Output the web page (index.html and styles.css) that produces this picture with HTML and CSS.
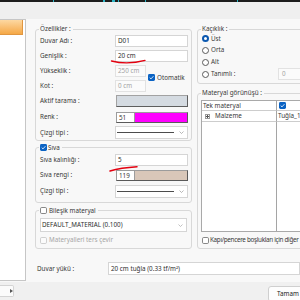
FILE: index.html
```html
<!DOCTYPE html>
<html lang="tr">
<head>
<meta charset="utf-8">
<title>Duvar özellikleri</title>
<link rel="stylesheet" href="styles.css">
</head>
<body>
<div class="window">
  <div class="topline"></div>
  <div class="toolbar"></div>
  <div class="main">
    <div class="tree"><div class="tree-item"></div></div>
    <div class="content">
      <div class="columns">
        <div class="col-left">
          <fieldset class="group props">
            <legend>Özellikler :</legend>
            <div class="form">
              <span class="lbl">Duvar Adı :</span><div class="input">D01</div>
              <span class="lbl">Genişlik :</span><div class="input">20 cm</div>
              <span class="lbl">Yükseklik :</span><div class="input dis h-in">250 cm</div>
              <span class="lbl">Kot :</span><div class="input dis k-in">0 cm</div>
              <div class="auto">
                <svg class="cb" viewBox="0 0 7 7"><rect x="0" y="0" width="7" height="7" rx="1.4" fill="#0b63c4"/><path d="M1.7 3.6 L3 4.9 L5.4 2.2" fill="none" stroke="#fff" stroke-width="0.8"/></svg>
                <span>Otomatik</span>
              </div>
              <span class="lbl">Aktif tarama :</span><div class="hatch"></div>
              <span class="lbl">Renk :</span><div class="swatch"><span class="num">51</span><span class="col magenta"></span></div>
              <span class="lbl">Çizgi tipi :</span><div class="select"><span class="line"></span><svg class="chev" width="5" height="3" viewBox="0 0 5 3"><path d="M0.5 0.5 L2.5 2.5 L4.5 0.5" fill="none" stroke="#9a9a9a" stroke-width="0.7"/></svg></div>
            </div>
          </fieldset>
          <fieldset class="group siva">
            <legend><span class="lg-cb"><svg class="cb" viewBox="0 0 7 7"><rect x="0" y="0" width="7" height="7" rx="1.4" fill="#0b63c4"/><path d="M1.7 3.6 L3 4.9 L5.4 2.2" fill="none" stroke="#fff" stroke-width="0.8"/></svg><span>Sıva</span></span></legend>
            <div class="form">
              <span class="lbl">Sıva kalınlığı :</span><div class="input">5</div>
              <span class="lbl">Sıva rengi :</span><div class="swatch"><span class="num">119</span><span class="col tan"></span></div>
              <span class="lbl">Çizgi tipi :</span><div class="select"><span class="line"></span><svg class="chev" width="5" height="3" viewBox="0 0 5 3"><path d="M0.5 0.5 L2.5 2.5 L4.5 0.5" fill="none" stroke="#9a9a9a" stroke-width="0.7"/></svg></div>
            </div>
          </fieldset>
          <fieldset class="group bilesik">
            <legend><span class="lg-cb"><svg class="cb" viewBox="0 0 7 7"><rect x="0.5" y="0.5" width="6" height="6" rx="1.2" fill="#fff" stroke="#6a6a6a" stroke-width="0.8"/></svg><span>Bileşik materyal</span></span></legend>
            <div class="select wide"><span>DEFAULT_MATERIAL (0.100)</span><svg class="chev" width="5" height="3" viewBox="0 0 5 3"><path d="M0.5 0.5 L2.5 2.5 L4.5 0.5" fill="none" stroke="#a8a8a8" stroke-width="0.7"/></svg></div>
            <div class="cbrow disabled">
              <svg class="cb" viewBox="0 0 7 7"><rect x="0.5" y="0.5" width="6" height="6" rx="1.2" fill="#fbfbfb" stroke="#c4c4c4" stroke-width="0.8"/></svg>
              <span>Materyalleri ters çevir</span>
            </div>
          </fieldset>
        </div>
        <div class="col-right">
          <fieldset class="group kac">
            <legend>Kaçıklık :</legend>
            <div class="radios">
              <div class="radio-row"><span class="radio on"></span><span>Üst</span></div>
              <div class="radio-row"><span class="radio"></span><span>Orta</span></div>
              <div class="radio-row"><span class="radio"></span><span>Alt</span></div>
              <div class="radio-row"><span class="radio"></span><span class="rlabel">Tanımlı :</span><div class="input dis small">0</div></div>
            </div>
          </fieldset>
          <fieldset class="group gor">
            <legend>Materyal görünüşü :</legend>
            <div class="mtable">
              <div class="c1 r-head">Tek materyal</div>
              <div class="c2 r-head"><svg class="cb" viewBox="0 0 7 7"><rect x="0" y="0" width="7" height="7" rx="1.4" fill="#0b63c4"/><path d="M1.7 3.6 L3 4.9 L5.4 2.2" fill="none" stroke="#fff" stroke-width="0.8"/></svg></div>
              <div class="c1 r-item"><span class="plus"></span><span>Malzeme</span></div>
              <div class="c2 r-item">Tuğla_1</div>
              <div class="c1 r-fill"></div>
              <div class="c2 r-fill"></div>
            </div>
            <div class="cbrow kapi">
              <svg class="cb" viewBox="0 0 7 7"><rect x="0.5" y="0.5" width="6" height="6" rx="1.2" fill="#fff" stroke="#6a6a6a" stroke-width="0.8"/></svg>
              <span class="kapi-text">Kapı/pencere boşlukları için diğer</span>
            </div>
          </fieldset>
        </div>
      </div>
      <div class="load">
        <span class="load-lbl">Duvar yükü :</span>
        <div class="input load-in">20 cm tuğla (0.33 tf/m²)</div>
      </div>
    </div>
  </div>
  <div class="footer">
    <div class="scroll-btn"><svg width="3" height="4" viewBox="0 0 3 4"><path d="M0 0 L3 2 L0 4 Z" fill="#555"/></svg></div>
    <div class="ok-btn">Tamam</div>
  </div>
  <svg class="marks" width="300" height="300" viewBox="0 0 300 300">
    <path d="M111.5 61 C 120 63.2, 133 63.6, 145 60.4" fill="none" stroke="#e3000f" stroke-width="1.4" stroke-linecap="round"/>
    <path d="M110 171 C 116 169.2, 124 167.6, 137 166.8" fill="none" stroke="#e3000f" stroke-width="1.5" stroke-linecap="round"/>
  </svg>
</div>
</body>
</html>
```
FILE: styles.css
```css
* { box-sizing: border-box; }
html, body { margin: 0; padding: 0; }
body {
  width: 300px;
  height: 300px;
  overflow: hidden;
  background: #f0f0f0;
  font-family: "Noto Sans", "DejaVu Sans", sans-serif;
  font-size: 6.3px;
  line-height: 1.2;
  color: #383838;
}
.window { position: relative; width: 300px; height: 300px; overflow: hidden; }

.topline {
  height: 2px;
  background: linear-gradient(to right,
    #1c1c1c 53px, #2bb5c6 53px 54px, #1c1c1c 54px 103px, #2bb5c6 103px 105px,
    #1c1c1c 105px 112px, #2bb5c6 112px 115px, #1c1c1c 115px 118px, #2bb5c6 118px 119px,
    #1c1c1c 119px 145px, #2bb5c6 145px 146px, #1c1c1c 146px 237px, #2bb5c6 237px 238px,
    #1c1c1c 238px);
}
.toolbar { height: 17px; background: #efefef; }

.main { display: flex; height: 263px; background: #f8f8f8; }
.tree {
  flex: none;
  width: 26px;
  height: 262px;
  background: #fff;
  border: 1px solid #c6c6c6;
  border-left: 0;
}
.tree-item {
  width: 23px;
  height: 15px;
  background: linear-gradient(#fdd8a2, #f5a846);
  border: 1px solid #e09640;
  border-left: 0;
  border-top: 0;
}

.content { flex: 1; min-width: 0; padding: 6px 0 0 9px; }
.columns { display: flex; gap: 5px; align-items: flex-start; }
.col-left { flex: none; width: 157px; display: flex; flex-direction: column; }
.col-right { flex: none; width: 160px; display: flex; flex-direction: column; }

.group {
  margin: 0;
  padding: 0 0 0 4px;
  border: 1px solid #d8d8d8;
  border-radius: 3px;
  min-width: 0;
}
.group legend { margin-left: -1px; padding: 0 2px 0 1px; line-height: 8px; }
.lg-cb { display: flex; align-items: center; gap: 1px; height: 9px; line-height: 9px; }
.bilesik .lg-cb { gap: 2px; }

.cb { display: block; width: 7px; height: 7px; flex: none; }

.form {
  display: grid;
  grid-template-columns: 75px 73px;
  align-items: center;
  justify-items: start;
}
.props .form { grid-template-rows: 14px 15px 15px 15px 16px 16px 15px; padding-top: 1px; }
.siva { margin-top: 2px; }
.siva .form { grid-template-rows: 15px 16px 16px; padding-bottom: 3px; }
.bilesik { margin-top: 3px; padding-bottom: 2px; }

.input {
  width: 73px;
  height: 12px;
  border: 1px solid #d5d5d5;
  background: #fff;
  padding: 0 2px;
  line-height: 10px;
  white-space: nowrap;
  overflow: hidden;
  color: #2e2e2e;
}
.input.dis { width: 31px; color: #a4a4a4; border-color: #e2e2e2; background: #fbfbfb; }
.h-in { grid-column: 2; grid-row: 3; }
.k-in { grid-column: 2; grid-row: 4; }
.auto {
  grid-column: 2;
  grid-row: 3 / 5;
  margin-left: 33px;
  display: flex;
  align-items: center;
  gap: 2px;
}

.hatch {
  margin-left: 1px;
  width: 72px;
  height: 12px;
  border: 1px solid;
  border-color: #a2a2a2 #5e5e5e #5e5e5e #a2a2a2;
  background-color: #e9edf1;
  background-image: radial-gradient(circle, #b3bcc8 0.55px, transparent 0.8px);
  background-size: 2px 2px;
}
.swatch {
  margin-left: 1px;
  width: 72px;
  height: 11px;
  display: flex;
  border: 1px solid;
  border-color: #9c9c9c #5a5a5a #5a5a5a #9c9c9c;
  background: #fff;
}
.swatch .num { width: 18px; flex: none; border-right: 1px solid #9c9c9c; padding-left: 2px; line-height: 9px; }
.swatch .col { flex: 1; }
.magenta { background: #ff00ff; }
.tan { background: #d9c7b9; }

.select {
  width: 73px;
  height: 13px;
  border: 1px solid #d5d5d5;
  background: #fff;
  display: flex;
  align-items: center;
  padding: 0 3px 0 1px;
}
.select .line { width: 57px; height: 1px; background: #4c4c4c; }
.chev { margin-left: auto; display: block; }
.select.wide { width: 147px; height: 14px; margin-top: 3px; padding-left: 1px; color: #2e2e2e; }

.cbrow { display: flex; align-items: center; gap: 2px; height: 12px; white-space: nowrap; }
.bilesik .cbrow { margin-top: 2px; }
.cbrow.disabled { color: #a6a6a6; }

/* right column */
.kac, .gor { padding-left: 3px; }
.kac legend, .gor legend { margin-left: 0; }
.radios { display: grid; grid-template-rows: 11px 12px 12px 12px; padding-bottom: 3px; }
.radio-row { display: flex; align-items: center; padding-left: 1px; }
.radio {
  width: 7px;
  height: 7px;
  border-radius: 50%;
  border: 1px solid #5a5a5a;
  background: #fff;
  margin-right: 2px;
  flex: none;
}
.radio.on { border: 2px solid #0b58b0; }
.rlabel { width: 67px; flex: none; }
.input.small { width: 40px; padding-left: 3px; }

.gor { margin-top: 5px; padding-bottom: 2px; }
.mtable {
  margin-top: 3px;
  height: 132px;
  border: 1px solid #a9a9a9;
  background: #fff;
  display: grid;
  grid-template-columns: 75px 1fr;
  grid-template-rows: 10px 11px 1fr;
}
.c1 { border-right: 1px solid #a5a5a5; display: flex; align-items: center; white-space: nowrap; overflow: hidden; }
.c2 { display: flex; align-items: center; padding-left: 1px; white-space: nowrap; }
.r-head, .r-item { border-bottom: 1px solid #cdcdcd; }
.r-head.c1 { padding-left: 1px; }
.r-head.c2 { padding-left: 2px; }
.r-item.c1 { padding-left: 3px; }
.plus {
  width: 5px;
  height: 5px;
  flex: none;
  margin-right: 5px;
  border: 1px solid #9a9a9a;
  background:
    linear-gradient(#555, #555) center / 3px 1px no-repeat,
    linear-gradient(#555, #555) center / 1px 3px no-repeat,
    #fff;
}
.kapi { margin-top: 2px; padding-left: 1px; gap: 1px; }
.kapi-text { letter-spacing: -0.3px; }

.load { display: flex; align-items: center; margin-top: 13px; height: 13px; }
.load-lbl { width: 73px; flex: none; padding-left: 2px; }
.load-in { width: 200px; height: 13px; line-height: 11px; padding-left: 2px; }

.footer { display: flex; align-items: flex-start; height: 18px; background: #f0f0f0; }
.scroll-btn {
  width: 16px;
  height: 12px;
  margin-top: 3px;
  border: 1px solid #d4d4d4;
  border-left: 0;
  border-radius: 0 2px 2px 0;
  background: #fbfbfb;
  display: flex;
  align-items: center;
  padding-left: 10px;
}
.scroll-btn svg { display: block; }
.ok-btn {
  margin-left: 254px;
  margin-top: 4px;
  width: 60px;
  height: 16px;
  flex: none;
  border: 1px solid #cfcfcf;
  border-radius: 3px;
  background: #fdfdfd;
  padding-left: 8px;
  line-height: 14px;
  color: #222;
}

.marks { position: absolute; left: 0; top: 0; pointer-events: none; }
```
